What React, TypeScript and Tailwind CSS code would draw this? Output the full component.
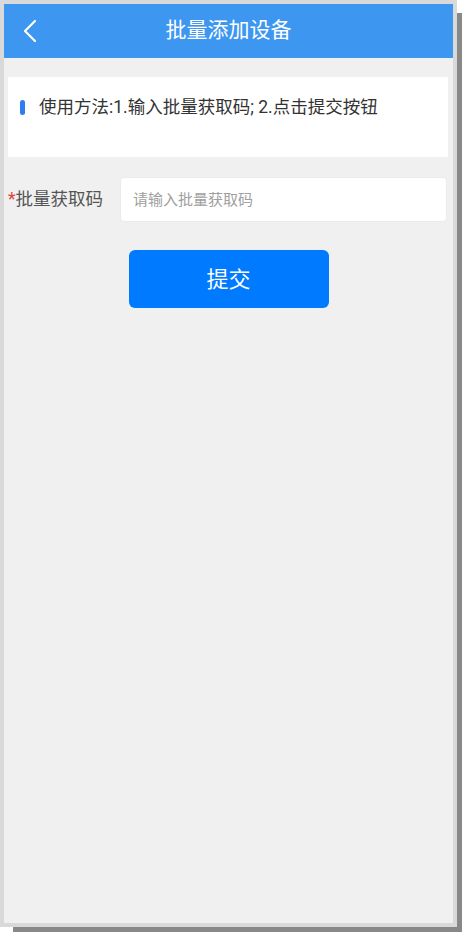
const FONT = "font-['Roboto','Noto_Sans_CJK_SC',sans-serif]";

function BackIcon() {
  return (
    <svg width="16" height="26" viewBox="0 0 16 26" fill="none">
      <polyline
        points="12,3 2,13 12,23"
        stroke="white"
        strokeWidth="2.2"
        strokeLinecap="round"
        strokeLinejoin="round"
      />
    </svg>
  );
}

export default function App() {
  return (
    <div className={`h-[936px] w-[466px] bg-white ${FONT}`}>
      <div className="h-[927px] w-[457px] bg-[#d9d9d9] p-1 shadow-[9px_9px_0_-4px_#888888]">
        <div className="flex h-full flex-col bg-[#f0f0f0]">
          <header className="relative flex h-[54px] items-center justify-center bg-[#3d97f0] text-white">
            <button className="absolute left-[19px] top-[14px]">
              <BackIcon />
            </button>
            <h1 className="text-[21px]">批量添加设备</h1>
          </header>

          <div className="ml-1 mr-[5px] mt-[19px] h-[80px] bg-white px-3 pt-[17px]">
            <div className="flex items-center gap-[14px] text-[17.5px] text-[#333]">
              <span className="h-[15px] w-[5px] rounded-full bg-[#2f7ef0]" />
              <span>使用方法:1.输入批量获取码; 2.点击提交按钮</span>
            </div>
          </div>

          <div className="mt-[20px] flex items-center pl-1 pr-[6px]">
            <label className="w-[112px] shrink-0 text-[17.5px] text-[#555]">
              <span className="text-[#e0433b]">*</span>批量获取码
            </label>
            <input
              className="h-[45px] flex-1 rounded-[4px] border border-[#ebebeb] bg-white px-3 text-[15px] text-[#333] outline-none placeholder:text-[#a0a0a0]"
              placeholder="请输入批量获取码"
            />
          </div>

          <div className="mt-[28px] flex justify-center">
            <button className="h-[58px] w-[200px] rounded-[6px] bg-[#007afe] text-[22px] text-white">
              提交
            </button>
          </div>
        </div>
      </div>
    </div>
  );
}
